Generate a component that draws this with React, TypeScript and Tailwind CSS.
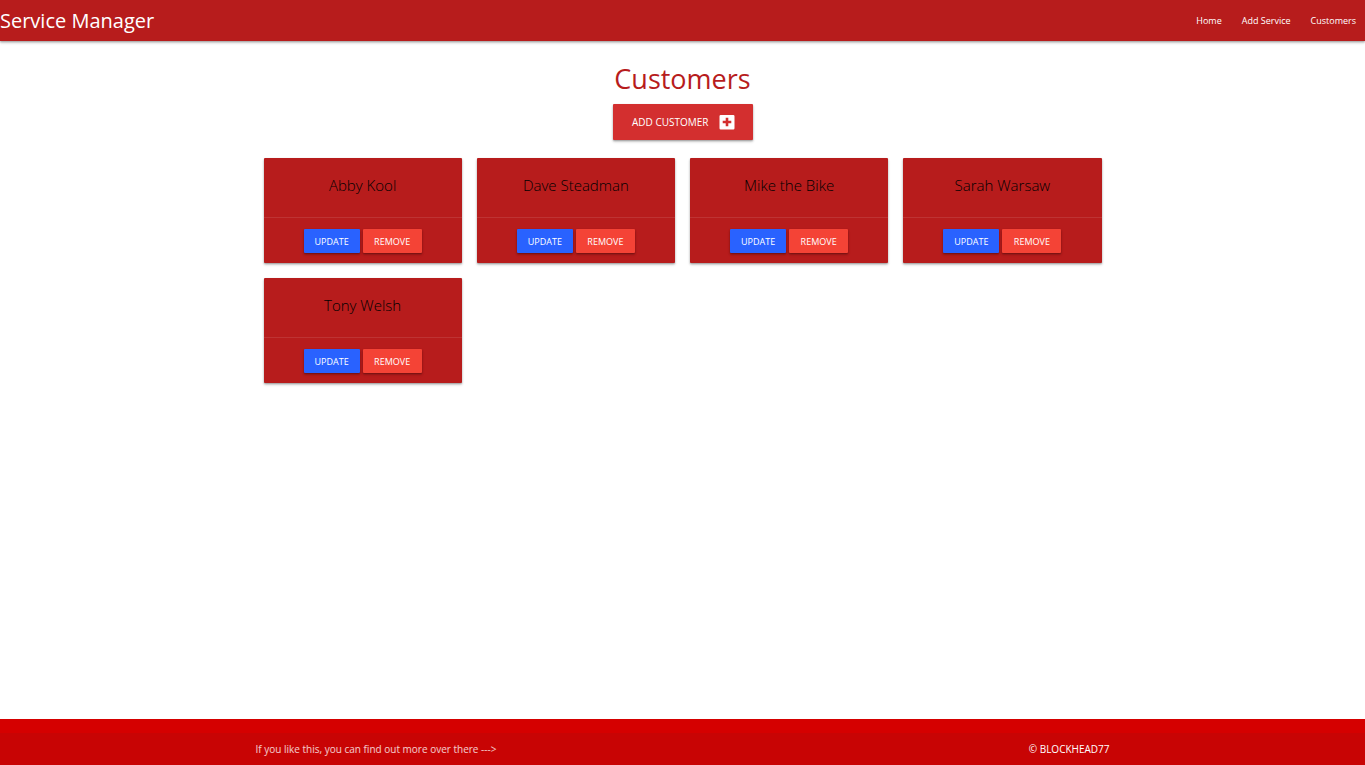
const customers = ['Abby Kool', 'Dave Steadman', 'Mike the Bike', 'Sarah Warsaw', 'Tony Welsh'];

const links = ['Home', 'Add Service', 'Customers'];

const raised = 'shadow-[0_1px_2px_rgba(0,0,0,0.3),0_2px_3px_rgba(0,0,0,0.14)]';

function AddBoxIcon() {
  return (
    <svg viewBox="0 0 20 20" className="size-5" fill="currentColor" aria-hidden="true">
      <path d="M16.3 3H3.7A1.2 1.2 0 0 0 2.5 4.2v12.1a1.2 1.2 0 0 0 1.2 1.2h12.6a1.2 1.2 0 0 0 1.2-1.2V4.200a1.200 1.200 0 0 0-1.200-1.200zM14.300 11.300h-3v3H8.700v-3h-3V8.700h3v-3h2.600v3h3z" />
    </svg>
  );
}

function CustomerCard({ name }: { name: string }) {
  return (
    <article className={`rounded-[1px] bg-[#b71c1c] text-center ${raised}`}>
      <h2 className="px-4 pt-4 pb-5 text-[15px] leading-[23px] font-light text-black">{name}</h2>
      <div className="flex justify-center gap-[3px] border-t border-[#be3333] pt-[11px] pb-[10px]">
        <button
          type="button"
          className={`h-6 w-14 rounded-[1px] bg-[#2962ff] pt-px text-[9px] text-white uppercase ${raised}`}
        >
          Update
        </button>
        <button
          type="button"
          className={`h-6 w-[59px] rounded-[1px] bg-[#f44336] pt-px text-[9px] text-white uppercase ${raised}`}
        >
          Remove
        </button>
      </div>
    </article>
  );
}

export default function App() {
  return (
    <div className="flex min-h-screen flex-col bg-white font-['Segoe_UI','Open_Sans',sans-serif]">
      <nav className={`flex h-[41px] items-center justify-between bg-[#b71c1c] text-white ${raised}`}>
        <a href="#" className="text-xl">
          Service Manager
        </a>
        <ul className="flex gap-5 pr-[9px] text-[9px]">
          {links.map((link) => (
            <li key={link}>
              <a href="#">{link}</a>
            </li>
          ))}
        </ul>
      </nav>

      <main className="mx-auto w-full max-w-[854px] px-2 pt-5">
        <div className="flex flex-col items-center">
          <h1 className="text-[27px] leading-9 text-[#b71c1c]">Customers</h1>
          <button
            type="button"
            className={`mt-[7px] flex h-9 w-[140px] items-center justify-end gap-2 rounded-[1px] bg-[#d32f2f] pr-4 text-[10px] text-white uppercase ${raised}`}
          >
            Add Customer
            <AddBoxIcon />
          </button>
        </div>
        <section className="mt-[18px] grid grid-cols-2 gap-[15px] sm:grid-cols-4">
          {customers.map((name) => (
            <CustomerCard key={name} name={name} />
          ))}
        </section>
      </main>

      <footer className="mt-auto bg-[#d50000] pt-[14px] text-[10px]">
        <div className="bg-[#c80404]">
          <div className="mx-auto flex h-8 w-full max-w-[854px] items-center justify-between">
            <p className="text-white/80">If you like this, you can find out more over there ---&gt;</p>
            <a href="#" className="text-white">
              © BLOCKHEAD77
            </a>
          </div>
        </div>
      </footer>
    </div>
  );
}
